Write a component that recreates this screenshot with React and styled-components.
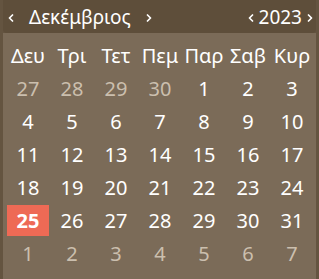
import React from 'react'
import styled, { createGlobalStyle } from 'styled-components'

const GlobalStyle = createGlobalStyle`
  html, body {
    margin: 0;
    padding: 0;
    background: #645440;
  }
  body {
    font-family: "Noto Sans", "Open Sans", sans-serif;
  }
`

const Frame = styled.div`
  width: 319px;
  height: 279px;
  box-sizing: border-box;
  padding: 0 3px 0 3px;
  background: #645440;
  display: flex;
  flex-direction: column;
`

const Header = styled.div`
  height: 33px;
  flex: none;
  background: #5e4e3a;
  border-radius: 0 0 4px 4px;
  display: flex;
  align-items: center;
  justify-content: space-between;
  color: #ffffff;
  font-size: 19px;
  padding: 2px 1px 0 3px;
  box-sizing: border-box;
`

const Group = styled.div`
  display: flex;
  align-items: center;
  gap: ${(props) => props.$gap}px;
`

const Arrow = styled.button`
  border: none;
  background: none;
  padding: 0;
  width: 10px;
  height: 20px;
  display: flex;
  align-items: center;
  justify-content: center;
  color: #ffffff;
`

const Label = styled.span`
  line-height: 1;
`

const Body = styled.div`
  flex: 1;
  background: #7b6b58;
  padding: 0 3px;
  display: grid;
  grid-template-columns: repeat(7, 44px);
  grid-template-rows: 38px repeat(6, 33px);
  align-content: start;
`

const WeekDay = styled.div`
  display: flex;
  align-items: center;
  justify-content: center;
  padding-top: 6px;
  color: #ffffff;
  font-size: 20px;
`

const Day = styled.div`
  display: flex;
  align-items: center;
  justify-content: center;
  font-size: 20px;
  color: ${(props) => (props.$muted ? '#cbbfae' : '#ffffff')};
  font-weight: ${(props) => (props.$today ? 700 : 400)};
`

const DayInner = styled.span`
  width: 42px;
  height: 31px;
  display: flex;
  align-items: center;
  justify-content: center;
  margin-top: 2px;
  background: ${(props) => (props.$today ? '#ee6a55' : 'transparent')};
`

const Chevron = ({ dir }) => (
  <svg width="6" height="8" viewBox="0 0 6 8">
    <path
      d={dir === 'left' ? 'M4.5 1 L1.5 4 L4.5 7' : 'M1.5 1 L4.5 4 L1.5 7'}
      fill="none"
      stroke="currentColor"
      strokeWidth="1.7"
      strokeLinecap="round"
      strokeLinejoin="round"
    />
  </svg>
)

const weekDays = ['Δευ', 'Τρι', 'Τετ', 'Πεμ', 'Παρ', 'Σαβ', 'Κυρ']

const days = [
  ...[27, 28, 29, 30].map((d) => ({ d, muted: true })),
  ...Array.from({ length: 31 }, (_, i) => ({ d: i + 1, today: i + 1 === 25 })),
  ...[1, 2, 3, 4, 5, 6, 7].map((d) => ({ d, muted: true })),
]

export default function App() {
  return (
    <>
      <GlobalStyle />
      <Frame>
        <Header>
          <Group $gap={13}>
            <Arrow><Chevron dir="left" /></Arrow>
            <Label>Δεκέμβριος</Label>
            <Arrow><Chevron dir="right" /></Arrow>
          </Group>
          <Group $gap={3}>
            <Arrow><Chevron dir="left" /></Arrow>
            <Label>2023</Label>
            <Arrow><Chevron dir="right" /></Arrow>
          </Group>
        </Header>
        <Body>
          {weekDays.map((w) => (
            <WeekDay key={w}>{w}</WeekDay>
          ))}
          {days.map((item, i) => (
            <Day key={i} $muted={item.muted} $today={item.today}>
              <DayInner $today={item.today}>{item.d}</DayInner>
            </Day>
          ))}
        </Body>
      </Frame>
    </>
  )
}
